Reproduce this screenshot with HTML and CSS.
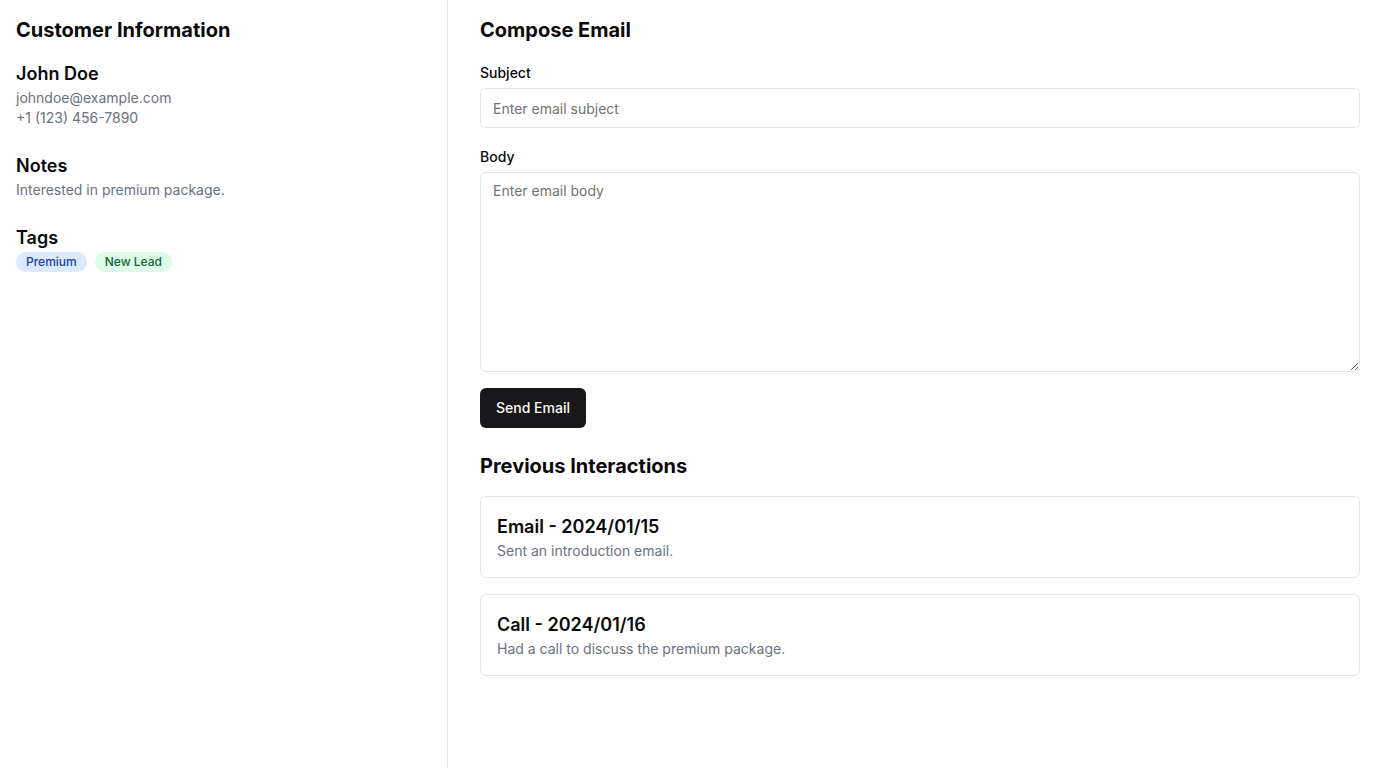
FILE: index.html
```html
<!DOCTYPE html>
<html lang="en">
<head>
<meta charset="utf-8">
<title>Customer</title>
<link rel="stylesheet" href="styles.css">
</head>
<body>
<div class="layout">
  <aside class="sidebar">
    <h2 class="title">Customer Information</h2>
    <section class="block first">
      <h3 class="subtitle">John Doe</h3>
      <p class="muted">johndoe@example.com</p>
      <p class="muted">+1 (123) 456-7890</p>
    </section>
    <section class="block">
      <h3 class="subtitle">Notes</h3>
      <p class="muted">Interested in premium package.</p>
    </section>
    <section class="block">
      <h3 class="subtitle">Tags</h3>
      <div class="tags">
        <span class="tag tag-blue">Premium</span>
        <span class="tag tag-green">New Lead</span>
      </div>
    </section>
  </aside>
  <main class="main">
    <h2 class="title">Compose Email</h2>
    <form class="form">
      <label class="label" for="subject">Subject</label>
      <input class="input" id="subject" type="text" placeholder="Enter email subject">
      <label class="label" for="body">Body</label>
      <textarea class="textarea" id="body" placeholder="Enter email body"></textarea>
      <div><button class="btn" type="button">Send Email</button></div>
    </form>
    <h2 class="title history-title">Previous Interactions</h2>
    <div class="cards">
      <div class="card">
        <h3 class="subtitle">Email - 2024/01/15</h3>
        <p class="muted">Sent an introduction email.</p>
      </div>
      <div class="card">
        <h3 class="subtitle">Call - 2024/01/16</h3>
        <p class="muted">Had a call to discuss the premium package.</p>
      </div>
    </div>
  </main>
</div>
</body>
</html>
```
FILE: styles.css
```css
* { box-sizing: border-box; }
html, body { margin: 0; padding: 0; }
body {
  font-family: Inter, "Liberation Sans", sans-serif;
  color: #09090b;
  background: #ffffff;
}
h2, h3, p { margin: 0; }
.layout {
  display: flex;
  min-height: 768px;
}
.sidebar {
  width: 448px;
  flex: 0 0 448px;
  border-right: 1px solid #e5e7eb;
  padding: 16px;
}
.main {
  flex: 1;
  padding: 16px 16px 16px 32px;
}
.title {
  font-size: 20px;
  line-height: 28px;
  font-weight: 700;
}
.block { margin-top: 24px; }
.block.first { margin-top: 16px; }
.subtitle {
  font-size: 18px;
  line-height: 28px;
  font-weight: 600;
}
.muted {
  font-size: 14px;
  line-height: 20px;
  color: #6b7280;
}
.tags { display: flex; gap: 8px; }
.tag {
  display: inline-block;
  height: 20px;
  line-height: 20px;
  padding: 0 10px;
  border-radius: 9999px;
  font-size: 12px;
  font-weight: 500;
}
.tag-blue { background: #dbeafe; color: #1e40af; }
.tag-green { background: #dcfce7; color: #166534; }
.form { display: flex; flex-direction: column; }
.label {
  display: block;
  font-size: 14px;
  line-height: 20px;
  font-weight: 500;
  margin-top: 19px;
  margin-bottom: 5px;
}
.input, .textarea {
  width: 100%;
  border: 1px solid #e5e7eb;
  border-radius: 6px;
  font-family: inherit;
  font-size: 14px;
  line-height: 20px;
  color: #09090b;
  background: #fff;
  padding: 0 12px;
  outline: none;
}
.input { height: 40px; }
.textarea { height: 200px; padding: 8px 12px; resize: vertical; display: block; }
.input::placeholder, .textarea::placeholder { color: #737373; }
.btn {
  margin-top: 16px;
  height: 40px;
  padding: 0 16px 1px;
  border: none;
  border-radius: 6px;
  background: #18181b;
  color: #fafafa;
  font-family: inherit;
  font-size: 14px;
  font-weight: 500;
}
.history-title { margin-top: 24px; }
.cards { margin-top: 16px; display: flex; flex-direction: column; gap: 16px; }
.card {
  border: 1px solid #e5e7eb;
  border-radius: 6px;
  padding: 16px;
}
```
